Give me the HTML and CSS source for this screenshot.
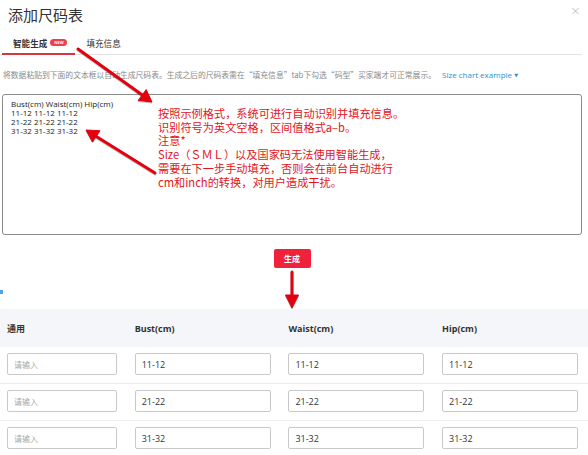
FILE: index.html
```html
<!DOCTYPE html>
<html lang="zh">
<head>
<meta charset="utf-8">
<title>添加尺码表</title>
<link rel="stylesheet" href="styles.css">
</head>
<body>
<div class="modal">
  <div class="header">
    <h1 class="title">添加尺码表</h1>
    <span class="close">×</span>
  </div>
  <div class="tabs">
    <div class="tab active">智能生成<span class="badge">NEW</span></div>
    <div class="tab">填充信息</div>
  </div>
  <p class="desc">将数据粘贴到下面的文本框以自动生成尺码表。生成之后的尺码表需在“填充信息”tab下勾选“码型”买家端才可正常展示。<a class="link">Size chart example <span class="caret">▼</span></a></p>
  <div class="textbox">
    <div class="line">Bust(cm) Waist(cm) Hip(cm)</div>
    <div class="line">11-12 11-12 11-12</div>
    <div class="line">21-22 21-22 21-22</div>
    <div class="line">31-32 31-32 31-32</div>
  </div>
  <div class="actions"><button class="btn">生成</button></div>
  <div class="marker"></div>
  <div class="table">
    <div class="row head">
      <div class="th">通用</div>
      <div class="th">Bust(cm)</div>
      <div class="th">Waist(cm)</div>
      <div class="th">Hip(cm)</div>
    </div>
    <div class="row">
      <div class="input placeholder">请输入</div>
      <div class="input">11-12</div>
      <div class="input">11-12</div>
      <div class="input">11-12</div>
    </div>
    <div class="row">
      <div class="input placeholder">请输入</div>
      <div class="input">21-22</div>
      <div class="input">21-22</div>
      <div class="input">21-22</div>
    </div>
    <div class="row">
      <div class="input placeholder">请输入</div>
      <div class="input">31-32</div>
      <div class="input">31-32</div>
      <div class="input">31-32</div>
    </div>
  </div>
</div>

<div class="note">按照示例格式，系统可进行自动识别并填充信息。<br>识别符号为英文空格，区间值格式a–b。<br>注意*<br>Size（ＳＭＬ）以及国家码无法使用智能生成，<br>需要在下一步手动填充，否则会在前台自动进行<br>cm和inch的转换，对用户造成干扰。</div>

<svg class="arrows" width="588" height="455" viewBox="0 0 588 455">
  <g fill="#e3000f" stroke="#e3000f">
    <line x1="78" y1="49" x2="143" y2="95.5" stroke-width="3" stroke-linecap="round"/>
    <polygon points="152,102 138.2,100.4 146.2,89.6" stroke-width="1" stroke-linejoin="round"/>
    <line x1="155" y1="173" x2="95.5" y2="136" stroke-width="3" stroke-linecap="round"/>
    <polygon points="86,130 99.9,130.7 92.5,142" stroke-width="1" stroke-linejoin="round"/>
    <line x1="292" y1="272" x2="292" y2="297" stroke-width="3" stroke-linecap="round"/>
    <polygon points="292,308 285.5,295 298.5,295" stroke-width="1" stroke-linejoin="round"/>
  </g>
</svg>
</body>
</html>
```
FILE: styles.css
```css
html, body {
  margin: 0;
  padding: 0;
}
body {
  width: 588px;
  height: 455px;
  overflow: hidden;
  position: relative;
  background: #fff;
  color: #333;
  font-family: "Open Sans", "Noto Sans CJK SC", sans-serif;
}
.modal {
  display: flex;
  flex-direction: column;
}
.header {
  display: flex;
  justify-content: space-between;
  align-items: center;
  height: 30px;
  padding: 0 7px 0 8px;
}
.title {
  margin: 0;
  font-family: "Noto Sans CJK SC", sans-serif;
  font-size: 15px;
  font-weight: 400;
  line-height: 20px;
  color: #333;
}
.close {
  align-self: flex-start;
  margin-top: 3px;
  font-size: 13px;
  line-height: 16px;
  color: #b5b5b5;
  font-family: "DejaVu Sans", sans-serif;
  font-weight: 200;
}
.tabs {
  display: flex;
  height: 24px;
  margin: 0 6px 0 2px;
  border-bottom: 1px solid #e2e2e2;
}
.tab {
  display: flex;
  align-items: center;
  height: 23px;
  padding: 0 9px 0 11px;
  font-family: "Noto Sans CJK SC", sans-serif;
  font-size: 8.6px;
  color: #333;
  box-sizing: border-box;
  padding-top: 3px;
}
.tab.active {
  font-weight: 700;
  border-bottom: 2px solid #d9353f;
  height: 25px;
  margin-bottom: -1px;
  padding-top: 2px;
  padding-right: 8px;
}
.badge {
  display: inline-flex;
  align-items: center;
  justify-content: center;
  width: 17px;
  height: 7px;
  margin-left: 3px;
  border-radius: 4px;
  background: #ef3e4c;
  color: #fff;
  font-family: "Open Sans", sans-serif;
  font-size: 4px;
  font-weight: 700;
  line-height: 7px;
}
.desc {
  margin: 14px 0 0 3px;
  font-family: "Noto Sans CJK SC", sans-serif;
  font-size: 7.8px;
  line-height: 12px;
  color: #8a8a8a;
  white-space: nowrap;
}
.link {
  margin-left: 6px;
  color: #2d8fcf;
  font-family: "Open Sans", sans-serif;
  font-size: 8px;
}
.caret {
  font-size: 5px;
  vertical-align: 1px;
  font-family: "DejaVu Sans", sans-serif;
}
.textbox {
  margin: 13px 6px 0 2px;
  height: 141px;
  box-sizing: border-box;
  border: 1px solid #8c8c8c;
  border-radius: 3px;
  padding: 4px 0 0 8px;
  font-family: "Open Sans", sans-serif;
  font-size: 8px;
  line-height: 9px;
  color: #222;
}
.actions {
  display: flex;
  justify-content: center;
  margin: 14px 6px 0 2px;
}
.btn {
  width: 37px;
  height: 19px;
  padding: 0;
  border: none;
  border-radius: 2px;
  background: #f0213a;
  color: #fff;
  font-family: "Noto Sans CJK SC", sans-serif;
  font-size: 8px;
  font-weight: 700;
}
.marker {
  width: 3px;
  height: 4px;
  margin-top: 22px;
  background: #4da3ee;
}
.table {
  margin-top: 15px;
}
.row {
  display: grid;
  grid-template-columns: 110px 136px 136px 136px;
  column-gap: 17.7px;
  padding: 6px 0 8px 7px;
  border-bottom: 1px solid #ededed;
  align-items: center;
}
.row.head {
  height: 38px;
  box-sizing: border-box;
  padding: 0 0 0 7px;
  background: #f5f6fa;
  border-bottom: none;
}
.th {
  font-family: "Open Sans", "Noto Sans CJK SC", sans-serif;
  font-size: 9px;
  font-weight: 700;
  color: #333;
}
.input {
  height: 22px;
  box-sizing: border-box;
  border: 1px solid #c9c9c9;
  border-radius: 2px;
  padding-left: 6px;
  display: flex;
  align-items: center;
  font-family: "Open Sans", "Noto Sans CJK SC", sans-serif;
  font-size: 9px;
  color: #333;
}
.input.placeholder {
  color: #a8a8a8;
  font-family: "Noto Sans CJK SC", sans-serif;
  font-size: 8px;
}
.note {
  position: absolute;
  left: 158px;
  top: 107px;
  font-family: "Noto Sans CJK SC", sans-serif;
  font-size: 11.2px;
  line-height: 13.7px;
  color: #e3141b;
  white-space: nowrap;
}
.arrows {
  position: absolute;
  left: 0;
  top: 0;
  pointer-events: none;
  filter: drop-shadow(0.5px 1px 0.6px rgba(0, 0, 0, 0.25));
}
```
